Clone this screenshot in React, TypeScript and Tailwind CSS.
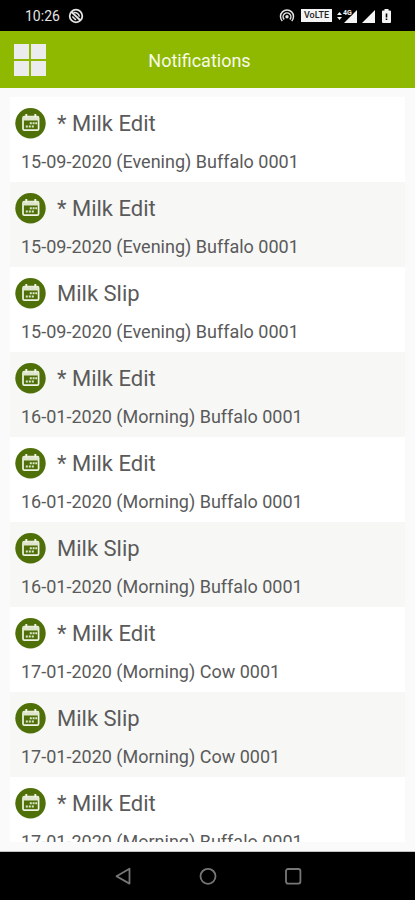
type Notice = {
  id: number
  title: string
  detail: string
}

const notices: Notice[] = [
  { id: 1, title: '* Milk Edit', detail: '15-09-2020 (Evening) Buffalo 0001' },
  { id: 2, title: '* Milk Edit', detail: '15-09-2020 (Evening) Buffalo 0001' },
  { id: 3, title: 'Milk Slip', detail: '15-09-2020 (Evening) Buffalo 0001' },
  { id: 4, title: '* Milk Edit', detail: '16-01-2020 (Morning) Buffalo 0001' },
  { id: 5, title: '* Milk Edit', detail: '16-01-2020 (Morning) Buffalo 0001' },
  { id: 6, title: 'Milk Slip', detail: '16-01-2020 (Morning) Buffalo 0001' },
  { id: 7, title: '* Milk Edit', detail: '17-01-2020 (Morning) Cow 0001' },
  { id: 8, title: 'Milk Slip', detail: '17-01-2020 (Morning) Cow 0001' },
  { id: 9, title: '* Milk Edit', detail: '17-01-2020 (Morning) Buffalo 0001' },
]

function StatusBar() {
  return (
    <div className="flex h-[31px] shrink-0 items-center justify-between bg-black pr-6 pl-[25px] text-[#e4e4e4]">
      <div className="flex items-center gap-2">
        <span className="text-sm">10:26</span>
        <svg className="size-4" viewBox="0 0 16 16" fill="none" stroke="currentColor" aria-hidden="true">
          <circle cx="8" cy="8" r="6.3" strokeWidth="1.8" />
          <path d="M5.5 4.6c3-.6 5.400 1.200 5.900 4" strokeWidth="1.500" />
          <path d="M3.500 4l9 8.500" strokeWidth="1.900" />
          <path d="M4.300 8.500l3.600 3.500" strokeWidth="1.700" />
        </svg>
      </div>
      <div className="flex items-center">
        {/* Hotspot */}
        <svg className="mr-1.5 h-[15px] w-4" viewBox="0 0 16 15" fill="none" stroke="currentColor" strokeWidth="1.5" aria-hidden="true">
          <path d="M3.300 13A6.500 6.500 0 1 1 12.700 13" />
          <path d="M5.200 11.500A3.900 3.900 0 1 1 10.800 11.500" />
          <circle cx="8" cy="8.700" r="1.700" fill="currentColor" stroke="none" />
        </svg>
        <span className="flex h-[13px] w-[31px] items-center justify-center bg-[#f4f4f4] text-[9px] font-medium text-[#222222]">
          VoLTE
        </span>
        {/* Mobile signal, battery */}
        <svg className="ml-1 h-4 w-[55px]" viewBox="0 0 55 16" fill="#f4f4f4" aria-hidden="true">
          <path d="M1 7l2.500-3L6 7zM1 9l2.500 3L6 9z" />
          <path d="M21 2v13H8z" />
          <text x="7" y="7" fontSize="7" fontWeight="700" fontFamily="Roboto, sans-serif" stroke="#000" strokeWidth="1.500" paintOrder="stroke">
            4G
          </text>
          <path d="M39 2v13H26z" />
          <path d="M48.500 1h4v1.500h1.500a1 1 0 0 1 1 1V14a1 1 0 0 1-1 1h-7a1 1 0 0 1-1-1V3.500a1 1 0 0 1 1-1h1.500z" />
          <path d="M49.700 5.500h1.600v4h-1.600zM49.700 10.500h1.600V12h-1.600z" fill="#000" />
        </svg>
      </div>
    </div>
  )
}

function CalendarBadge() {
  return (
    <svg className="size-[31px] shrink-0" viewBox="0 0 31 31" aria-hidden="true">
      <circle cx="15.500" cy="15.300" r="15.200" fill="#4f7009" />
      <rect x="8" y="8.500" width="15.600" height="13.600" rx="1.400" fill="none" stroke="#f1f4e6" strokeWidth="1.700" />
      <path d="M8 8.500h15.600v4H8z" fill="#dfe6cd" />
      <path d="M11.300 6v3.500M20.300 6v3.500" stroke="#f1f4e6" strokeWidth="1.900" />
      <path
        d="M14.800 14.200h2v2h-2zM17.600 14.200h2v2h-2zM20.300 14.200h1.800v2h-1.800zM10.800 17.600h2v2h-2zM13.800 17.600h2v2h-2zM16.800 17.600h2v2h-2z"
        fill="#dfe6cd"
      />
    </svg>
  )
}

function NoticeRow({ notice }: { notice: Notice }) {
  return (
    <li className="bg-white pt-2.5 pb-2 pl-[5px] even:bg-[#f7f7f6]">
      <div className="flex h-8 items-center gap-[11px]">
        <CalendarBadge />
        <h2 className="pt-0.5 text-[22px] leading-8">{notice.title}</h2>
      </div>
      <p className="mt-[11px] pl-1.5 text-lg leading-6">{notice.detail}</p>
    </li>
  )
}

function SystemNav() {
  return (
    <nav className="flex h-12 shrink-0 items-center justify-center gap-[61px] bg-black text-[#777777]">
      <button type="button" aria-label="Back">
        <svg className="size-6" viewBox="0 0 24 24" fill="none" stroke="currentColor" strokeWidth="1.800" strokeLinejoin="round" aria-hidden="true">
          <path d="M18.500 4.800v14.800L5.500 12.200z" />
        </svg>
      </button>
      <button type="button" aria-label="Home">
        <svg className="size-6" viewBox="0 0 24 24" fill="none" stroke="currentColor" strokeWidth="1.800" aria-hidden="true">
          <circle cx="12" cy="12.300" r="7.500" />
        </svg>
      </button>
      <button type="button" aria-label="Recent apps">
        <svg className="size-6" viewBox="0 0 24 24" fill="none" stroke="currentColor" strokeWidth="1.800" aria-hidden="true">
          <rect x="5" y="5" width="14.400" height="14.600" rx="2" />
        </svg>
      </button>
    </nav>
  )
}

export default function App() {
  return (
    <div className="flex h-screen flex-col bg-[#fafafa] font-[Roboto,sans-serif] text-[#5a5a5a]">
      <StatusBar />
      <header className="grid h-[57px] shrink-0 grid-cols-[1fr_auto_1fr] items-center bg-[#8eb900] px-3.5">
        <button type="button" aria-label="Menu" className="grid size-8 grid-cols-2 gap-0.5">
          <span className="bg-[#ececec]" />
          <span className="bg-[#ececec]" />
          <span className="bg-[#ececec]" />
          <span className="bg-[#ececec]" />
        </button>
        <h1 className="pt-0.5 pr-4 text-lg text-[#f7faea]">Notifications</h1>
      </header>
      <main className="min-h-0 flex-1 border-b border-[#c4c4c4] px-2.5 py-[9px]">
        <ul className="h-full overflow-hidden">
          {notices.map((notice) => (
            <NoticeRow key={notice.id} notice={notice} />
          ))}
        </ul>
      </main>
      <SystemNav />
    </div>
  )
}
